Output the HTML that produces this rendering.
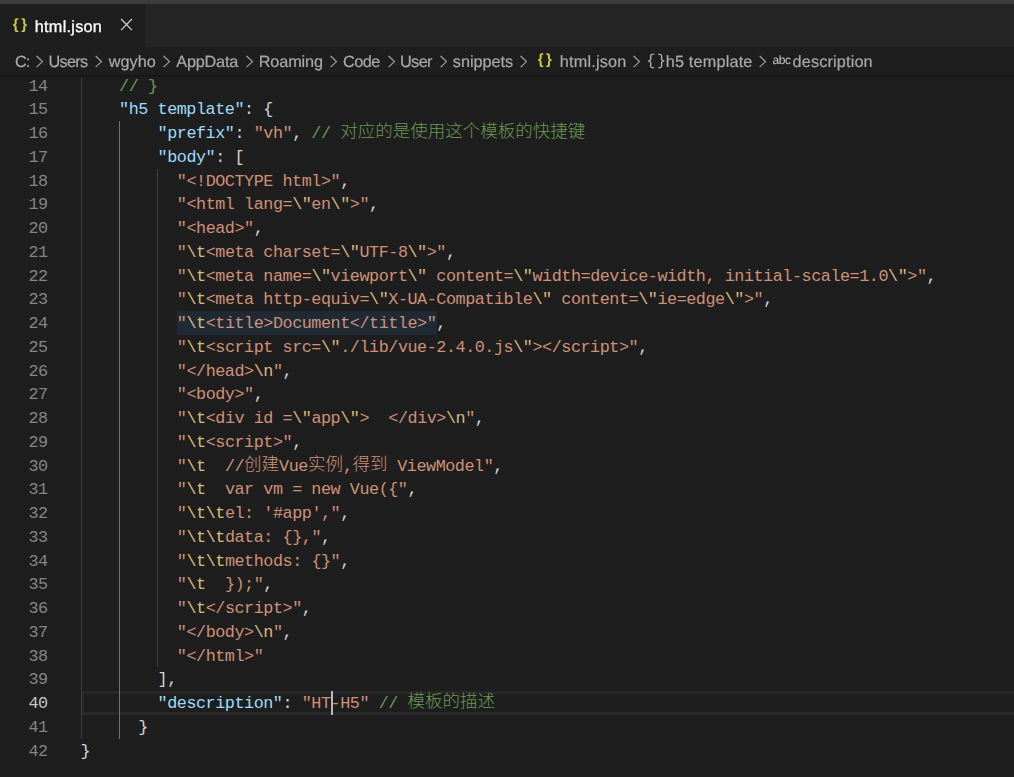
<!DOCTYPE html>
<html lang="zh"><head><meta charset="utf-8"><title>html.json</title><style>
*{box-sizing:border-box;margin:0;padding:0}
html,body{width:1014px;height:777px;overflow:hidden;background:#1e1e1e}
body{position:relative;font-family:"Liberation Sans","Noto Sans CJK SC",sans-serif;color:#ccc}
.topstrip{position:absolute;left:0;top:0;width:1014px;height:4px;background:#3c3c3c}
.tabs{position:absolute;left:0;top:4px;width:1014px;height:43px;background:#252526}
.tab{position:absolute;left:0;top:0;width:145px;height:43px;background:#1e1e1e}
.tab.fg{top:4px;background:none}
.crumbs.fg{background:none}
.tab .ico{position:absolute;left:12.85px;top:11.1px;font-family:"Liberation Sans",sans-serif;font-size:15px;line-height:20px;color:#cbcb41;font-weight:bold;letter-spacing:2.6px;white-space:nowrap}
.ui{position:absolute;left:0;top:0;width:1014px;height:80px;will-change:transform;text-rendering:geometricPrecision}
.tab .name{position:absolute;font-size:16.25px;color:#fff;-webkit-text-stroke:0.3px #fff;line-height:20px;white-space:nowrap}
.tab svg{position:absolute;left:120.4px;top:14.4px}
.crumbs{position:absolute;left:0;top:47px;width:1014px;height:28px;background:#1e1e1e}
.crumbs span{position:absolute;top:4.75px;font-size:16.25px;line-height:20px;color:#a9a9a9;white-space:nowrap}
.crumbs span.t{-webkit-text-stroke:0.2px #a9a9a9}
.crumbs svg{position:absolute}
.shadow{position:absolute;left:0;top:75px;width:1014px;height:3px;background:linear-gradient(#141414 0,#141414 33%,#191919 34%,#191919 66%,#1c1c1c 67%)}
.editor{position:absolute;left:0;top:0;width:1014px;height:777px;font-family:"Liberation Mono","Noto Sans CJK SC",monospace;font-size:16.8px;letter-spacing:-0.46px}
.ln{position:absolute;left:0;width:47.7px;text-align:right;color:#858585;height:23.75px;line-height:23.75px;white-space:pre}
.ln.act{color:#c6c6c6}
.cl{position:absolute;height:23.75px;line-height:23.75px;white-space:pre}
.k{color:#9cdcfe}.s{color:#ce9178}.e{color:#d7ba7d}.p{color:#d4d4d4}.c{color:#6a9955}
.cj{font-size:17.5px;letter-spacing:0;font-weight:300;position:relative;top:-1px}
.hl{position:absolute;background:#202a35}
.g{position:absolute;width:1px;background:#404040}
.g.a{background:#707070}
.curline{position:absolute;left:81px;width:933px;border-top:3px solid #282828;border-bottom:3px solid #282828;border-left:3px solid #282828}
.cursor{position:absolute;width:2px;background:#bababa}
</style></head><body>
<div class="editor">
<div class="curline" style="top:691px;height:24px"></div>
<div class="hl" style="left:177.20px;top:311.00px;width:259.74px;height:23.75px"></div>
<div class="g" style="left:81px;top:73.50px;height:665.00px"></div>
<div class="g a" style="left:119px;top:121.00px;height:617.50px"></div>
<div class="g" style="left:157px;top:168.50px;height:498.75px"></div>
<div class="ln" style="top:74.70px">14</div>
<div class="cl" style="top:74.70px;left:119.08px"><span class="c">// }</span></div>
<div class="ln" style="top:98.45px">15</div>
<div class="cl" style="top:98.45px;left:119.08px"><span class="k">"h5 template"</span><span class="p">: {</span></div>
<div class="ln" style="top:122.20px">16</div>
<div class="cl" style="top:122.20px;left:157.56px"><span class="k">"prefix"</span><span class="p">: </span><span class="s">"vh"</span><span class="p">, </span><span class="c">// <span class="cj">对应的是使用这个模板的快捷键</span></span></div>
<div class="ln" style="top:145.95px">17</div>
<div class="cl" style="top:145.95px;left:157.56px"><span class="k">"body"</span><span class="p">: [</span></div>
<div class="ln" style="top:169.70px">18</div>
<div class="cl" style="top:169.70px;left:176.80px"><span class="s">"&lt;!DOCTYPE html&gt;"</span><span class="p">,</span></div>
<div class="ln" style="top:193.45px">19</div>
<div class="cl" style="top:193.45px;left:176.80px"><span class="s">"&lt;html lang=</span><span class="e">\"</span><span class="s">en</span><span class="e">\"</span><span class="s">&gt;"</span><span class="p">,</span></div>
<div class="ln" style="top:217.20px">20</div>
<div class="cl" style="top:217.20px;left:176.80px"><span class="s">"&lt;head&gt;"</span><span class="p">,</span></div>
<div class="ln" style="top:240.95px">21</div>
<div class="cl" style="top:240.95px;left:176.80px"><span class="s">"</span><span class="e">\t</span><span class="s">&lt;meta charset=</span><span class="e">\"</span><span class="s">UTF-8</span><span class="e">\"</span><span class="s">&gt;"</span><span class="p">,</span></div>
<div class="ln" style="top:264.70px">22</div>
<div class="cl" style="top:264.70px;left:176.80px"><span class="s">"</span><span class="e">\t</span><span class="s">&lt;meta name=</span><span class="e">\"</span><span class="s">viewport</span><span class="e">\"</span><span class="s"> content=</span><span class="e">\"</span><span class="s">width=device-width, initial-scale=1.0</span><span class="e">\"</span><span class="s">&gt;"</span><span class="p">,</span></div>
<div class="ln" style="top:288.45px">23</div>
<div class="cl" style="top:288.45px;left:176.80px"><span class="s">"</span><span class="e">\t</span><span class="s">&lt;meta http-equiv=</span><span class="e">\"</span><span class="s">X-UA-Compatible</span><span class="e">\"</span><span class="s"> content=</span><span class="e">\"</span><span class="s">ie=edge</span><span class="e">\"</span><span class="s">&gt;"</span><span class="p">,</span></div>
<div class="ln" style="top:312.20px">24</div>
<div class="cl" style="top:312.20px;left:176.80px"><span class="s">"</span><span class="e">\t</span><span class="s">&lt;title&gt;Document&lt;/title&gt;"</span><span class="p">,</span></div>
<div class="ln" style="top:335.95px">25</div>
<div class="cl" style="top:335.95px;left:176.80px"><span class="s">"</span><span class="e">\t</span><span class="s">&lt;script src=</span><span class="e">\"</span><span class="s">./lib/vue-2.4.0.js</span><span class="e">\"</span><span class="s">&gt;&lt;/script&gt;"</span><span class="p">,</span></div>
<div class="ln" style="top:359.70px">26</div>
<div class="cl" style="top:359.70px;left:176.80px"><span class="s">"&lt;/head&gt;</span><span class="e">\n</span><span class="s">"</span><span class="p">,</span></div>
<div class="ln" style="top:383.45px">27</div>
<div class="cl" style="top:383.45px;left:176.80px"><span class="s">"&lt;body&gt;"</span><span class="p">,</span></div>
<div class="ln" style="top:407.20px">28</div>
<div class="cl" style="top:407.20px;left:176.80px"><span class="s">"</span><span class="e">\t</span><span class="s">&lt;div id =</span><span class="e">\"</span><span class="s">app</span><span class="e">\"</span><span class="s">&gt;  &lt;/div&gt;</span><span class="e">\n</span><span class="s">"</span><span class="p">,</span></div>
<div class="ln" style="top:430.95px">29</div>
<div class="cl" style="top:430.95px;left:176.80px"><span class="s">"</span><span class="e">\t</span><span class="s">&lt;script&gt;"</span><span class="p">,</span></div>
<div class="ln" style="top:454.70px">30</div>
<div class="cl" style="top:454.70px;left:176.80px"><span class="s">"</span><span class="e">\t</span><span class="s">  //<span class="cj">创建</span>Vue<span class="cj">实例</span>,<span class="cj">得到</span> ViewModel"</span><span class="p">,</span></div>
<div class="ln" style="top:478.45px">31</div>
<div class="cl" style="top:478.45px;left:176.80px"><span class="s">"</span><span class="e">\t</span><span class="s">  var vm = new Vue({"</span><span class="p">,</span></div>
<div class="ln" style="top:502.20px">32</div>
<div class="cl" style="top:502.20px;left:176.80px"><span class="s">"</span><span class="e">\t</span><span class="e">\t</span><span class="s">el: '#app',"</span><span class="p">,</span></div>
<div class="ln" style="top:525.95px">33</div>
<div class="cl" style="top:525.95px;left:176.80px"><span class="s">"</span><span class="e">\t</span><span class="e">\t</span><span class="s">data: {},"</span><span class="p">,</span></div>
<div class="ln" style="top:549.70px">34</div>
<div class="cl" style="top:549.70px;left:176.80px"><span class="s">"</span><span class="e">\t</span><span class="e">\t</span><span class="s">methods: {}"</span><span class="p">,</span></div>
<div class="ln" style="top:573.45px">35</div>
<div class="cl" style="top:573.45px;left:176.80px"><span class="s">"</span><span class="e">\t</span><span class="s">  });"</span><span class="p">,</span></div>
<div class="ln" style="top:597.20px">36</div>
<div class="cl" style="top:597.20px;left:176.80px"><span class="s">"</span><span class="e">\t</span><span class="s">&lt;/script&gt;"</span><span class="p">,</span></div>
<div class="ln" style="top:620.95px">37</div>
<div class="cl" style="top:620.95px;left:176.80px"><span class="s">"&lt;/body&gt;</span><span class="e">\n</span><span class="s">"</span><span class="p">,</span></div>
<div class="ln" style="top:644.70px">38</div>
<div class="cl" style="top:644.70px;left:176.80px"><span class="s">"&lt;/html&gt;"</span></div>
<div class="ln" style="top:668.45px">39</div>
<div class="cl" style="top:668.45px;left:157.56px"><span class="p">],</span></div>
<div class="ln act" style="top:692.20px">40</div>
<div class="cl" style="top:692.20px;left:157.56px"><span class="k">"description"</span><span class="p">: </span><span class="s">"HT-H5"</span><span class="p"> </span><span class="c">// <span class="cj">模板的描述</span></span></div>
<div class="ln" style="top:715.95px">41</div>
<div class="cl" style="top:715.95px;left:138.32px"><span class="p">}</span></div>
<div class="ln" style="top:739.70px">42</div>
<div class="cl" style="top:739.70px;left:80.60px"><span class="p">}</span></div>
<div class="cursor" style="left:331px;top:691px;height:24px"></div>
</div>
<div class="topstrip"></div>
<div class="tabs"><div class="tab"></div></div><div class="crumbs"></div><div class="shadow"></div>
<div class="ui"><div class="tab fg"><span class="ico">{}</span><span class="name" style="left:34.80px;top:13.45px;letter-spacing:0.256px">html.json</span><svg width="13" height="13" viewBox="0 0 13 13"><path d="M1.1 1 L11.9 12.2 M11.9 1 L1.1 12.2" stroke="#d4d4d4" stroke-width="1.2" fill="none"/></svg></div><div class="crumbs fg"><span class="t" style="left:15.05px;letter-spacing:-1.150px">C:</span><span class="t" style="left:48.45px;letter-spacing:-0.700px">Users</span><span class="t" style="left:108.70px;letter-spacing:0.038px">wgyho</span><span class="t" style="left:176.30px;letter-spacing:-0.208px">AppData</span><span class="t" style="left:258.75px;letter-spacing:-0.125px">Roaming</span><span class="t" style="left:342.95px;letter-spacing:-0.500px">Code</span><span class="t" style="left:399.95px;letter-spacing:-0.583px">User</span><span class="t" style="left:452.80px;letter-spacing:-0.029px">snippets</span><span class="t" style="left:559.80px;letter-spacing:0.188px">html.json</span><span class="t" style="left:665.70px;letter-spacing:0.175px">h5 template</span><span class="t" style="left:792.50px;letter-spacing:0.155px">description</span><svg style="left:35.9px;top:7.5px" width="8" height="13" viewBox="0 0 8 13"><path d="M0.6 1 L6.5 6.6 L0.6 12.2" stroke="#a3a3a3" stroke-width="1.15" fill="none"/></svg><svg style="left:95.3px;top:7.5px" width="8" height="13" viewBox="0 0 8 13"><path d="M0.6 1 L6.5 6.6 L0.6 12.2" stroke="#a3a3a3" stroke-width="1.15" fill="none"/></svg><svg style="left:162.8px;top:7.5px" width="8" height="13" viewBox="0 0 8 13"><path d="M0.6 1 L6.5 6.6 L0.6 12.2" stroke="#a3a3a3" stroke-width="1.15" fill="none"/></svg><svg style="left:246.1px;top:7.5px" width="8" height="13" viewBox="0 0 8 13"><path d="M0.6 1 L6.5 6.6 L0.6 12.2" stroke="#a3a3a3" stroke-width="1.15" fill="none"/></svg><svg style="left:330.1px;top:7.5px" width="8" height="13" viewBox="0 0 8 13"><path d="M0.6 1 L6.5 6.6 L0.6 12.2" stroke="#a3a3a3" stroke-width="1.15" fill="none"/></svg><svg style="left:388.1px;top:7.5px" width="8" height="13" viewBox="0 0 8 13"><path d="M0.6 1 L6.5 6.6 L0.6 12.2" stroke="#a3a3a3" stroke-width="1.15" fill="none"/></svg><svg style="left:440.1px;top:7.5px" width="8" height="13" viewBox="0 0 8 13"><path d="M0.6 1 L6.5 6.6 L0.6 12.2" stroke="#a3a3a3" stroke-width="1.15" fill="none"/></svg><svg style="left:519.9px;top:7.5px" width="8" height="13" viewBox="0 0 8 13"><path d="M0.6 1 L6.5 6.6 L0.6 12.2" stroke="#a3a3a3" stroke-width="1.15" fill="none"/></svg><svg style="left:632.7px;top:7.5px" width="8" height="13" viewBox="0 0 8 13"><path d="M0.6 1 L6.5 6.6 L0.6 12.2" stroke="#a3a3a3" stroke-width="1.15" fill="none"/></svg><svg style="left:759.1px;top:7.5px" width="8" height="13" viewBox="0 0 8 13"><path d="M0.6 1 L6.5 6.6 L0.6 12.2" stroke="#a3a3a3" stroke-width="1.15" fill="none"/></svg><span style="left:537.65px;top:3.2px;color:#cbcb41;font-weight:bold;font-size:15px;letter-spacing:2.6px">{}</span><span style="left:646.35px;top:4.05px;font-family:'Liberation Mono',monospace;font-size:15.5px;letter-spacing:1.2px;color:#b4b4b4">{}</span><span style="left:772.6px;font-size:12px;top:3.2px;letter-spacing:-0.45px;color:#c8c8c8">abc</span></div></div>
</body></html>
